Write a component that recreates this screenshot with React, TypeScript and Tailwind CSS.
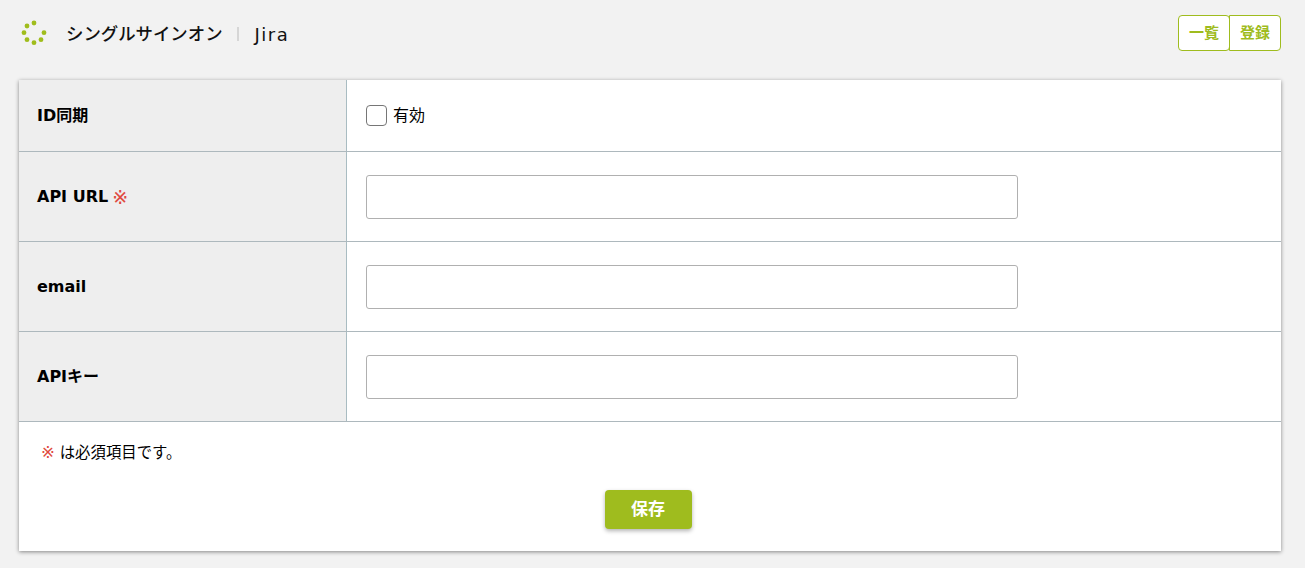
import React from 'react';

const font = "font-['DejaVu_Sans','Noto_Sans_CJK_JP',sans-serif]";

function Logo() {
  const dots = [
    [24, 11],
    [34, 20.7],
    [31, 27.7],
    [24, 30.7],
    [17, 27.7],
    [14, 20.7],
    [17, 14],
  ];
  return (
    <svg width="28" height="28" viewBox="10 8 28 28" className="shrink-0">
      {dots.map(([cx, cy], i) => (
        <circle key={i} cx={cx} cy={cy} r="2.4" fill="#a0bd1c" />
      ))}
    </svg>
  );
}

function Row({ label, required, children, h }: { label: string; required?: boolean; children: React.ReactNode; h: string }) {
  return (
    <div className={`flex border-b border-[#adb8bd] ${h}`}>
      <div className="w-[328px] shrink-0 bg-[#eeeeee] border-r border-[#a9bcc2] flex items-center pl-[18px] pt-px text-[16px] font-bold text-black">
        {label}
        {required && <span className="ml-[4px] text-[19px] leading-none text-[#e04a40] font-normal">※</span>}
      </div>
      <div className="flex-1 flex items-center pl-[19px]">{children}</div>
    </div>
  );
}

function TextInput() {
  return <input type="text" className="w-[652px] h-[44px] bg-white border border-[#b0b0b0] rounded-[3px]" />;
}

export default function App() {
  return (
    <div className={`min-h-[568px] bg-[#f2f2f2] ${font}`}>
      <header className="h-[80px] flex items-start justify-between pl-[20px] pr-[24px]">
        <div className="flex items-center h-[67px] pt-px">
          <Logo />
          <span className="ml-[18px] text-[17.4px] font-medium text-[#111111]">シングルサインオン</span>
          <span className="ml-[14px] mr-[16px] w-[2px] h-[14px] bg-[#d6d6d6]" />
          <span className="text-[18px] tracking-[1.5px] text-[#111111]">Jira</span>
        </div>
        <div className="flex mt-[15px] text-[15px] font-bold text-[#9fbc1e]">
          <button className="w-[52px] h-[36px] bg-white border border-[#9fbc1e] rounded-[4px]">一覧</button>
          <button className="w-[52px] h-[36px] -ml-px bg-white border border-[#9fbc1e] rounded-r-[4px]">登録</button>
        </div>
      </header>
      <main className="ml-[19px] w-[1262px] h-[471px] bg-white shadow-[0_1px_4px_rgba(0,0,0,0.45)]">
        <Row label="ID同期" h="h-[72px]">
          <label className="flex items-center text-[16px] text-black">
            <span className="w-[21px] h-[21px] border border-[#767676] rounded-[4px] bg-white mr-[6px]" />
            有効
          </label>
        </Row>
        <Row label="API URL" required h="h-[90px]">
          <TextInput />
        </Row>
        <Row label="email" h="h-[90px]">
          <TextInput />
        </Row>
        <Row label="APIキー" h="h-[90px]">
          <TextInput />
        </Row>
        <p className="mt-[21px] ml-[22px] text-[15.4px] leading-[20px] text-black">
          <span className="text-[16.5px] leading-none text-[#e04a40]">※</span> は必須項目です。
        </p>
        <div className="flex justify-center mt-[27px] pr-[4px]">
          <button className="w-[87px] h-[39px] rounded-[4px] bg-[#9fbc1e] text-white font-bold text-[17px] shadow-[0_2px_4px_rgba(0,0,0,0.3)]">
            保存
          </button>
        </div>
      </main>
    </div>
  );
}
